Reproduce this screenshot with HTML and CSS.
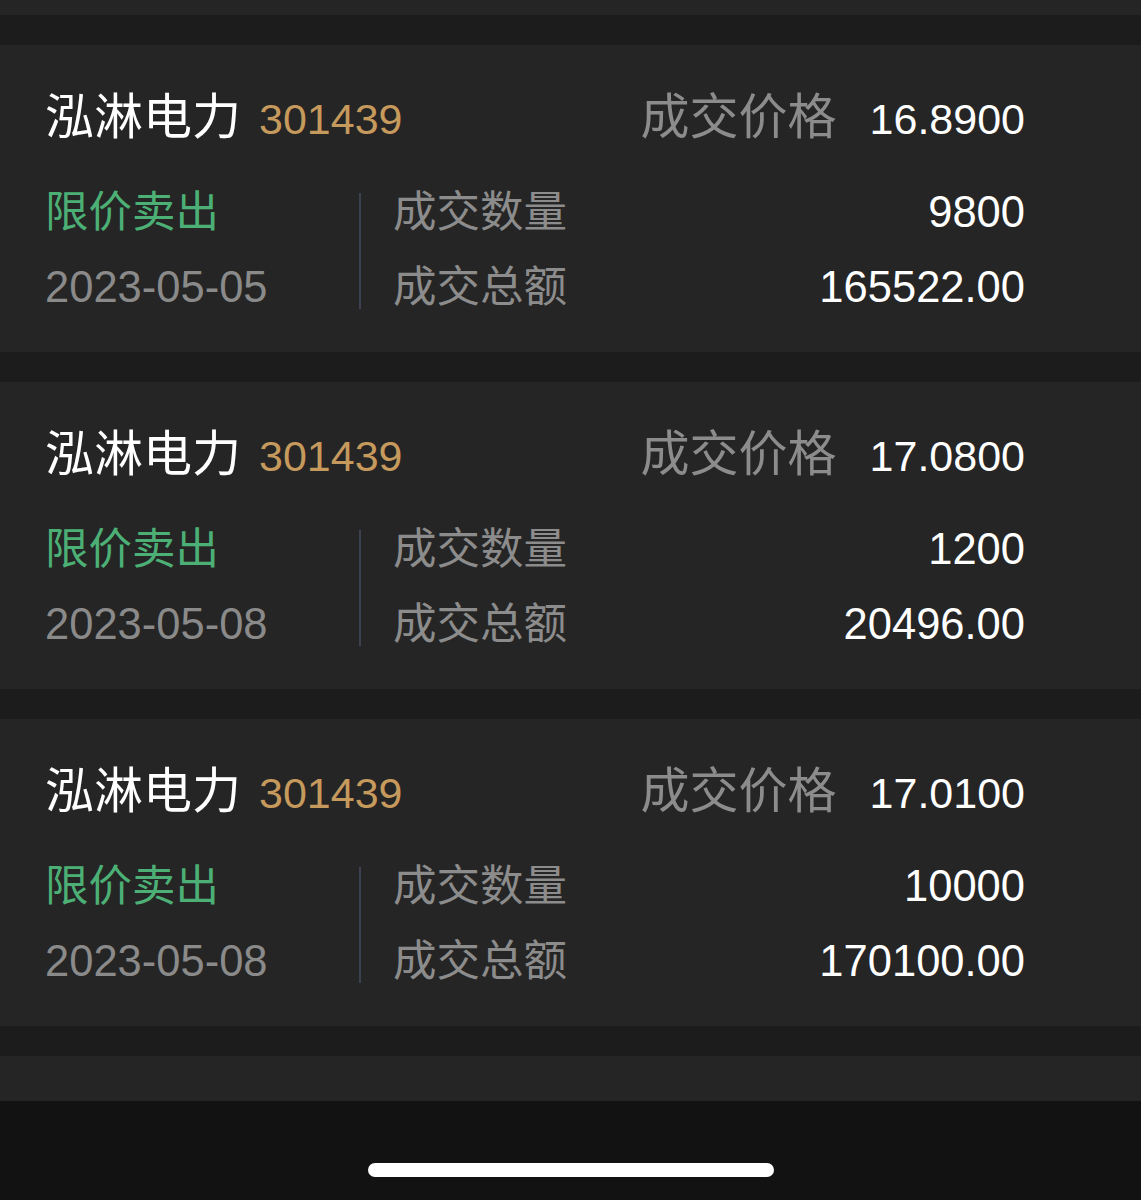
FILE: index.html
```html
<!DOCTYPE html>
<html lang="zh-CN">
<head>
<meta charset="UTF-8">
<meta name="viewport" content="width=device-width, initial-scale=1">
<title>成交明细</title>
<link rel="stylesheet" href="styles.css">
</head>
<body>
<div class="list">
  <div class="card card-stub-top"></div>

  <div class="card">
    <div class="head">
      <div class="stock"><span class="name">泓淋电力</span><span class="code">301439</span></div>
      <div class="price"><span class="label">成交价格</span><span class="value">16.8900</span></div>
    </div>
    <div class="body">
      <div class="side">
        <div class="row type">限价卖出</div>
        <div class="row date">2023-05-05</div>
      </div>
      <div class="divider"></div>
      <div class="fields">
        <div class="row"><span class="label">成交数量</span><span class="value">9800</span></div>
        <div class="row"><span class="label">成交总额</span><span class="value">165522.00</span></div>
      </div>
    </div>
  </div>

  <div class="card">
    <div class="head">
      <div class="stock"><span class="name">泓淋电力</span><span class="code">301439</span></div>
      <div class="price"><span class="label">成交价格</span><span class="value">17.0800</span></div>
    </div>
    <div class="body">
      <div class="side">
        <div class="row type">限价卖出</div>
        <div class="row date">2023-05-08</div>
      </div>
      <div class="divider"></div>
      <div class="fields">
        <div class="row"><span class="label">成交数量</span><span class="value">1200</span></div>
        <div class="row"><span class="label">成交总额</span><span class="value">20496.00</span></div>
      </div>
    </div>
  </div>

  <div class="card">
    <div class="head">
      <div class="stock"><span class="name">泓淋电力</span><span class="code">301439</span></div>
      <div class="price"><span class="label">成交价格</span><span class="value">17.0100</span></div>
    </div>
    <div class="body">
      <div class="side">
        <div class="row type">限价卖出</div>
        <div class="row date">2023-05-08</div>
      </div>
      <div class="divider"></div>
      <div class="fields">
        <div class="row"><span class="label">成交数量</span><span class="value">10000</span></div>
        <div class="row"><span class="label">成交总额</span><span class="value">170100.00</span></div>
      </div>
    </div>
  </div>

  <div class="card card-stub-bottom"></div>
</div>

<div class="home-bar">
  <div class="home-indicator"></div>
</div>
</body>
</html>
```

FILE: styles.css
```css
body {
  margin: 0;
  background: #1c1c1c;
  font-family: "Liberation Sans", "Noto Sans CJK SC", sans-serif;
  color: #fff;
}

.list {
  display: flex;
  flex-direction: column;
  gap: 30px;
}

.card {
  background: #252525;
  padding: 48px 116px 28px 45px;
  height: 307px;
  box-sizing: border-box;
}

.card-stub-top {
  height: 15px;
  padding: 0;
}

.card-stub-bottom {
  height: 45px;
  padding: 0;
}

/* header row: stock name + trade price */
.head {
  display: flex;
  justify-content: space-between;
  align-items: center;
  height: 60px;
  line-height: 60px;
}

.stock .name {
  font-size: 49px;
  color: #fff;
}

.stock .code {
  font-size: 43px;
  color: #c6995c;
  margin-left: 18px;
}

.price .label {
  font-size: 49px;
  color: #8c8c8c;
}

.price .value {
  font-size: 43px;
  color: #fff;
  margin-left: 33px;
}

/* lower block */
.body {
  display: flex;
  margin-top: 22px;
}

.row {
  height: 75px;
  line-height: 75px;
  font-size: 43.5px;
}

.side {
  width: 314px;
}

.type {
  color: #4cb076;
}

.date {
  color: #8a8a8a;
}

.divider {
  width: 2px;
  background: #3c4152;
  margin: 18px 0 16px;
}

.fields {
  flex: 1;
  padding-left: 32px;
}

.fields .row {
  display: flex;
  justify-content: space-between;
}

.fields .label {
  color: #8c8c8c;
}

.fields .value {
  color: #fff;
}

.home-bar {
  height: 100px;
  background: #121212;
  display: flex;
  justify-content: center;
}

.home-indicator {
  width: 406px;
  height: 14px;
  border-radius: 7px;
  background: #fff;
  margin-top: 62px;
}
```
